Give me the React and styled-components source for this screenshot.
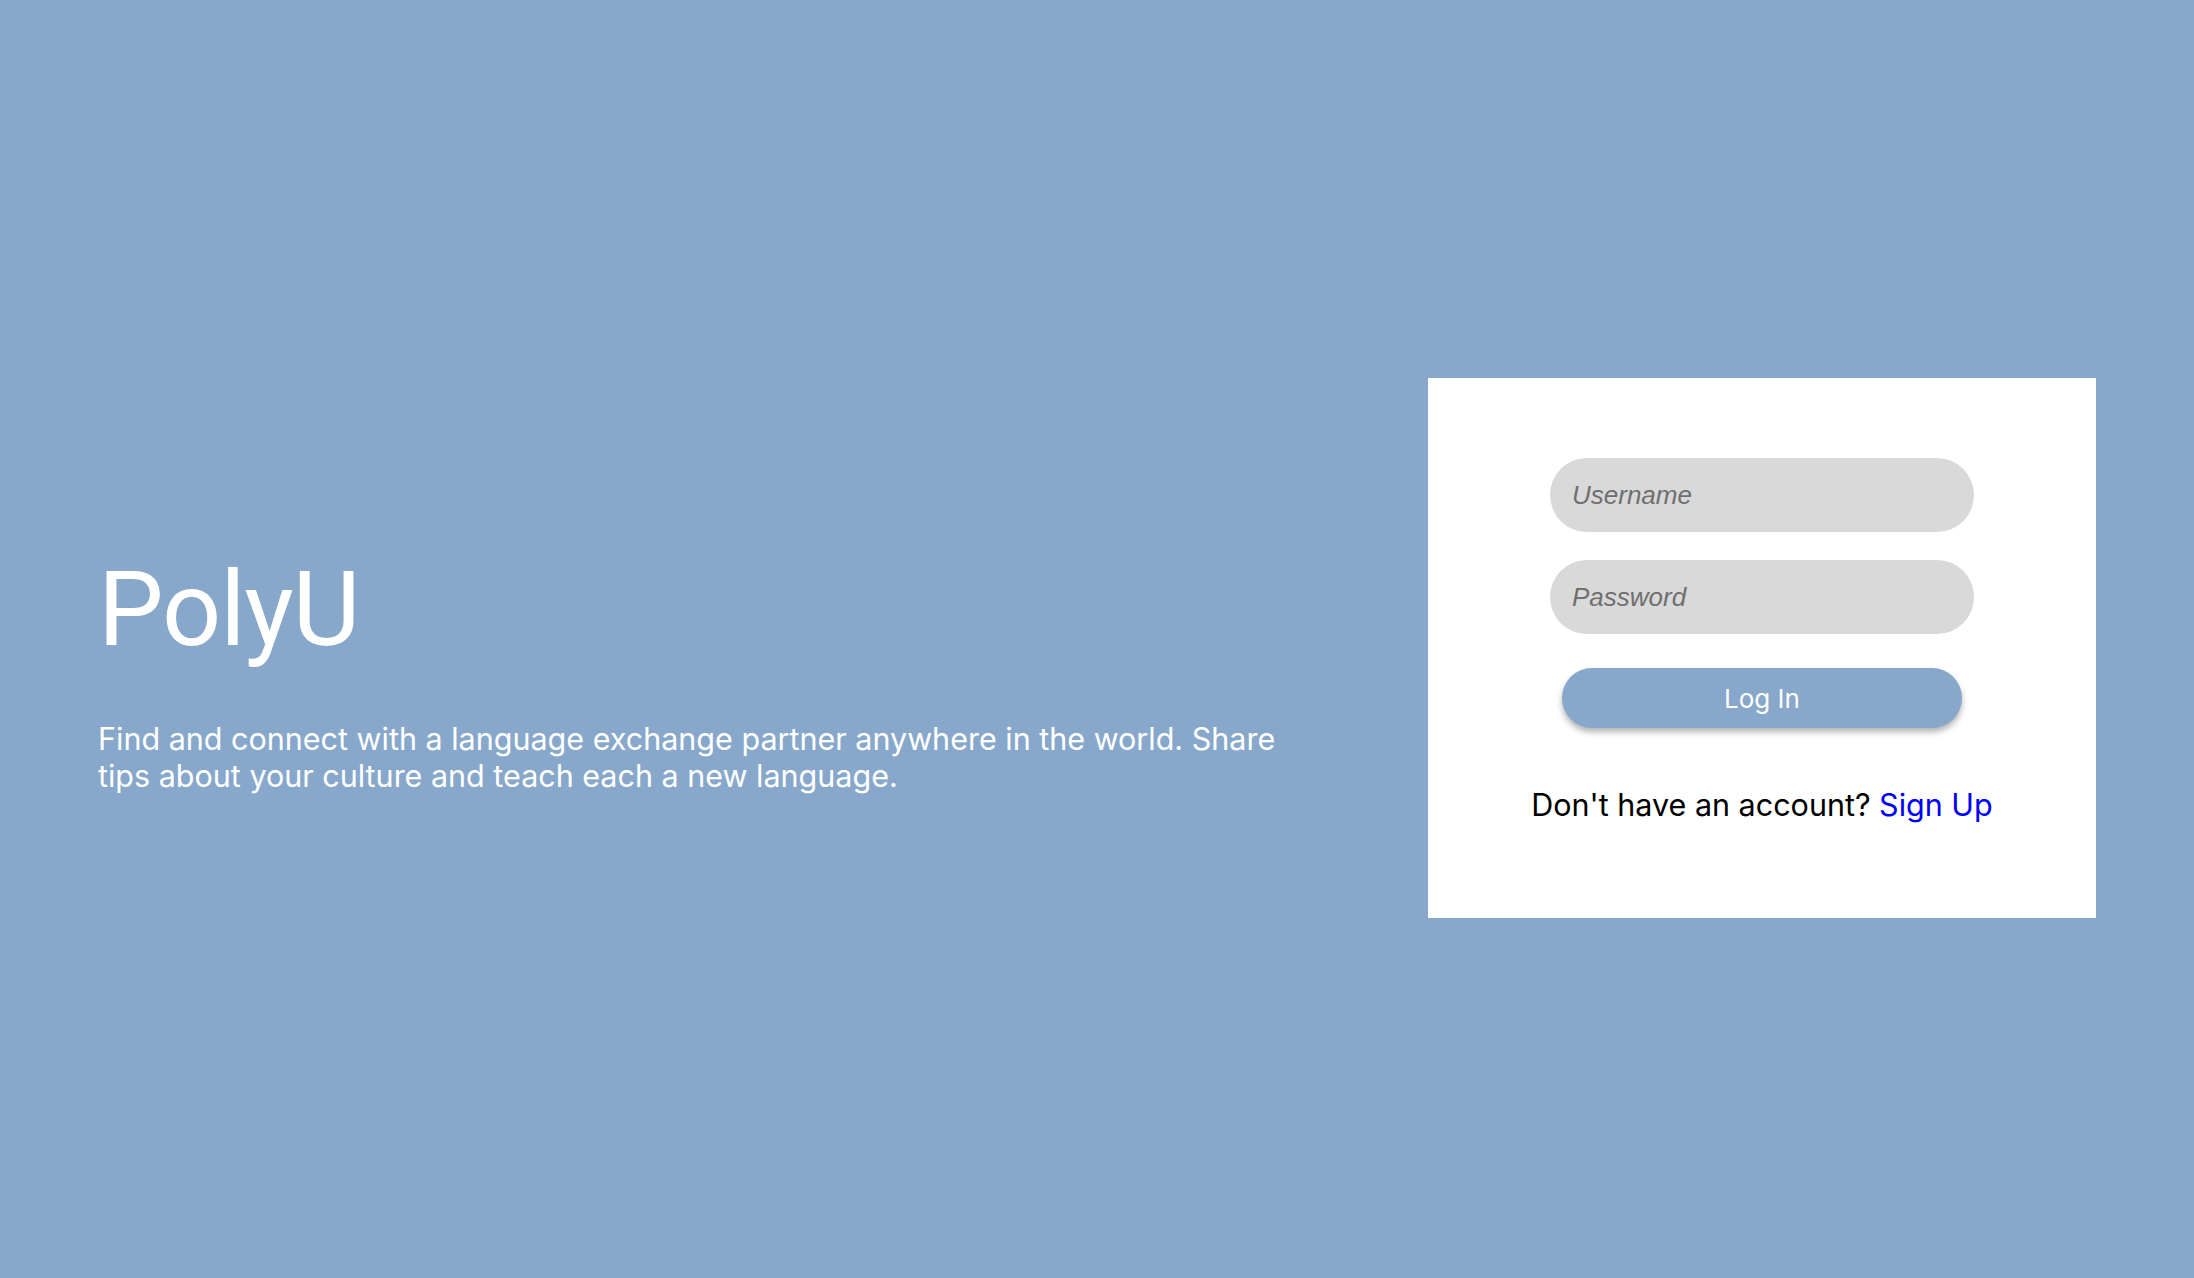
import styled, { createGlobalStyle } from 'styled-components';

const GlobalStyle = createGlobalStyle`
    * {
        box-sizing: border-box;
    }
    body {
        margin: 0;
        background-color: #87a8cb;
        font-family: Inter, "Noto Sans", sans-serif;
    }
`;

export default function App() {
    return (
        <>
            <GlobalStyle />
            <Page>
                <Intro>
                    <Title>PolyU</Title>
                    <Tagline>
                        Find and connect with a language exchange partner anywhere in the world. Share
                        tips about your culture and teach each a new language.
                    </Tagline>
                </Intro>
                <Card>
                    <Form onSubmit={e => e.preventDefault()}>
                        <Field type="text" placeholder="Username" />
                        <Field type="password" placeholder="Password" />
                        <LoginButton type="submit">Log In</LoginButton>
                    </Form>
                    <SignUpText>
                        Don't have an account? <SignUpLink href="#">Sign Up</SignUpLink>
                    </SignUpText>
                </Card>
            </Page>
        </>
    );
}

const Page = styled.main`
    display: flex;
    align-items: center;
    justify-content: space-between;
    height: 100vh;
    padding: 18px 98px 0;
`;

const Intro = styled.section`
    width: 1200px;
    margin-top: 46px;
    color: #fff;
`;

const Title = styled.h1`
    margin: 0 0 47px;
    font-family: Roboto, Inter, sans-serif;
    font-size: 104px;
    font-weight: 400;
    line-height: 1.2;
    letter-spacing: -1px;
`;

const Tagline = styled.p`
    margin: 0;
    font-size: 30.5px;
    line-height: 37px;
`;

const Card = styled.div`
    display: flex;
    flex-direction: column;
    align-items: center;
    width: 668px;
    height: 540px;
    padding-top: 80px;
    background-color: #fff;
`;

const Form = styled.form`
    display: flex;
    flex-direction: column;
    align-items: center;
    gap: 28px;
`;

const Field = styled.input`
    width: 424px;
    height: 74px;
    padding: 0 22px;
    border: none;
    border-radius: 37px;
    background-color: #d9d9d9;
    font-family: "Liberation Sans", Arial, sans-serif;
    font-size: 26px;
    outline: none;
    &::placeholder {
        color: #6f6f6f;
        font-style: italic;
    }
`;

const LoginButton = styled.button`
    width: 400px;
    height: 60px;
    margin-top: 6px;
    border: none;
    border-radius: 30px;
    background-color: #87a8cb;
    color: #fff;
    font-family: Inter, sans-serif;
    font-size: 26px;
    box-shadow: 0 4px 6px rgba(0, 0, 0, 0.3);
    cursor: pointer;
`;

const SignUpText = styled.p`
    margin: 58px 0 0;
    font-size: 30.5px;
    color: #000;
`;

const SignUpLink = styled.a`
    color: #0000ff;
    text-decoration: none;
`;
